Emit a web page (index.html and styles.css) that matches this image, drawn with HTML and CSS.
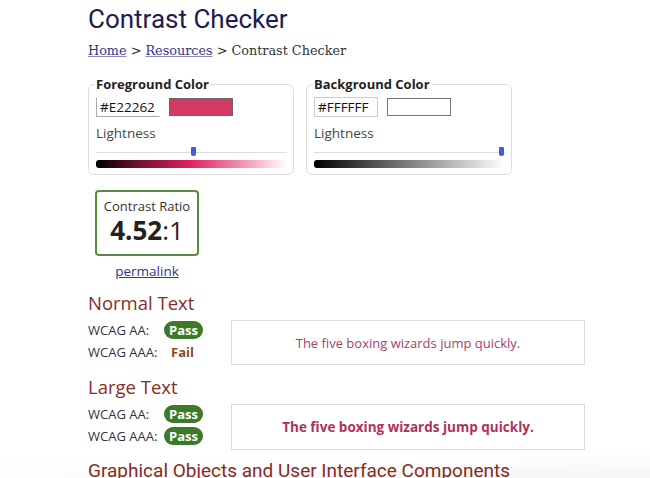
FILE: index.html
```html
<!DOCTYPE html>
<html>
<head>
<meta charset="utf-8">
<link rel="stylesheet" href="styles.css">
</head>
<body>
<main class="page">
  <h1 class="title">Contrast Checker</h1>
  <nav class="crumbs"><a href="#">Home</a> &gt; <a href="#">Resources</a> &gt; Contrast Checker</nav>

  <div class="pickers">
    <fieldset class="picker">
      <legend>Foreground Color</legend>
      <div class="row">
        <input class="hex" type="text" value="#E22262">
        <span class="swatch fg"></span>
      </div>
      <div class="label">Lightness</div>
      <div class="slider"><span class="thumb fg-thumb"></span></div>
      <div class="grad fg-grad"></div>
    </fieldset>
    <fieldset class="picker">
      <legend>Background Color</legend>
      <div class="row">
        <input class="hex" type="text" value="#FFFFFF">
        <span class="swatch bg"></span>
      </div>
      <div class="label">Lightness</div>
      <div class="slider"><span class="thumb bg-thumb"></span></div>
      <div class="grad bg-grad"></div>
    </fieldset>
  </div>

  <div class="ratio-wrap">
    <div class="ratio">
      <div class="ratio-label">Contrast Ratio</div>
      <div class="ratio-value">4.52<span class="colon">:</span><span class="one">1</span></div>
    </div>
    <a class="permalink" href="#">permalink</a>
  </div>

  <h2 class="section first">Normal Text</h2>
  <div class="result">
    <div class="checks">
      <div class="check"><span class="lvl">WCAG AA:</span><span class="badge pass">Pass</span></div>
      <div class="check"><span class="lvl">WCAG AAA:</span><span class="badge fail">Fail</span></div>
    </div>
    <div class="sample">The five boxing wizards jump quickly.</div>
  </div>

  <h2 class="section">Large Text</h2>
  <div class="result">
    <div class="checks">
      <div class="check"><span class="lvl">WCAG AA:</span><span class="badge pass">Pass</span></div>
      <div class="check"><span class="lvl">WCAG AAA:</span><span class="badge pass">Pass</span></div>
    </div>
    <div class="sample large">The five boxing wizards jump quickly.</div>
  </div>

  <h2 class="section last">Graphical Objects and User Interface Components</h2>
</main>
<div class="shade"></div>
</body>
</html>
```
FILE: styles.css
```css
html, body {
  margin: 0;
  padding: 0;
  background: #fff;
}
body {
  font-family: "Open Sans", "Noto Sans", sans-serif;
  color: #333;
  overflow: hidden;
  height: 478px;
}
.page {
  padding: 4px 0 0 88px;
}
.title {
  font-family: Roboto, sans-serif;
  font-weight: 400;
  font-size: 26px;
  line-height: 31px;
  color: #1e1b52;
  margin: 0;
}
.crumbs {
  font-family: "DejaVu Serif", serif;
  font-size: 12.8px;
  color: #333;
  margin-top: 7px;
  line-height: 18px;
}
.crumbs a {
  color: #34348a;
  text-decoration-thickness: 1px;
  text-decoration-color: #8a8ac0;
}
.pickers {
  display: flex;
  gap: 12px;
  margin-top: 16px;
}
.picker {
  width: 191px;
  margin: 0;
  padding: 0 6px 6px 7px;
  border: 1px solid #ddd;
  border-radius: 6px;
  min-width: 0;
}
.picker legend {
  font-weight: 700;
  font-size: 13px;
  color: #222;
  padding: 0 1px;
  margin-left: -1px;
  line-height: 16px;
}
.row {
  display: flex;
  align-items: center;
  gap: 9px;
  margin-top: 5px;
}
.hex {
  width: 56px;
  height: 18px;
  box-sizing: content-box;
  padding: 0 3px;
  font-family: "Open Sans", sans-serif;
  font-size: 13.5px;
  color: #111;
  border: 1px solid #aaa;
  border-top-color: #fff;
  border-right-color: #fff;
  margin: 0;
}
.picker + .picker .hex {
  border: 1px solid #ccc;
}
.swatch {
  width: 62px;
  height: 16px;
  border: 1px solid #666;
}
.swatch.fg { background: #d23a64; }
.swatch.bg { background: #fff; border-color: #777; }
.label {
  font-size: 13.5px;
  color: #444;
  margin-top: 7px;
  line-height: 18px;
}
.slider {
  position: relative;
  height: 1px;
  background: #ddd;
  margin-top: 10px;
}
.thumb {
  position: absolute;
  top: -5px;
  width: 5px;
  height: 9px;
  background: #4a5bd0;
  border-radius: 1px 1px 2px 2px;
}
.fg-thumb { left: 95px; }
.bg-thumb { left: 185px; }
.grad {
  height: 8px;
  border-radius: 3px;
  margin-top: 7px;
}
.fg-grad {
  background: linear-gradient(to right, #000 0%, #7a1234 25%, #e22262 50%, #f08cb0 75%, #fff 100%);
}
.bg-grad {
  background: linear-gradient(to right, #000, #fff);
}
.ratio-wrap {
  display: flex;
  flex-direction: column;
  align-items: center;
  width: 106px;
  margin-top: 15px;
  margin-left: 6px;
}
.ratio {
  width: 100px;
  height: 62px;
  border: 2px solid #5b8a3c;
  border-radius: 4px;
  text-align: center;
}
.ratio-label {
  font-size: 13px;
  color: #333;
  margin-top: 6px;
  line-height: 16px;
}
.ratio-value {
  font-weight: 700;
  font-size: 26px;
  color: #222;
  line-height: 30px;
  margin-top: 1px;
}
.ratio-value .colon { font-weight: 400; }
.ratio-value .one { font-weight: 400; color: #3a1a22; }
.permalink {
  font-size: 13.5px;
  color: #34348a;
  margin-top: 6px;
}
.section {
  font-family: "Open Sans", sans-serif;
  font-weight: 400;
  font-size: 18.5px;
  color: #8a2c24;
  margin: 10px 0 0;
  line-height: 24px;
}
.section.first {
  margin-top: 11px;
}
.section.last {
  font-family: Roboto, sans-serif;
  font-size: 19px;
  margin-top: 9px;
}
.result {
  display: flex;
  align-items: flex-start;
  margin-top: 5px;
}
.checks {
  width: 143px;
  margin-top: -1px;
}
.check {
  display: flex;
  align-items: center;
  height: 22px;
}
.lvl {
  width: 76px;
  font-size: 13px;
  color: #333;
}
.badge {
  font-size: 13px;
  font-weight: 700;
  line-height: 18px;
  padding: 0 5px;
  border-radius: 9px;
}
.badge.pass {
  background: #3c7a27;
  color: #fff;
}
.badge.fail {
  color: #8a4a1c;
  padding-left: 7px;
}
.sample {
  width: 352px;
  height: 43px;
  border: 1px solid #ddd;
  display: flex;
  align-items: center;
  justify-content: center;
  font-size: 13px;
  color: #a8406a;
}
.sample.large {
  height: 44px;
  font-size: 13.5px;
  font-weight: 700;
  color: #b0305e;
}
.shade {
  position: fixed;
  left: 0;
  right: 0;
  bottom: 0;
  height: 26px;
  pointer-events: none;
  background: linear-gradient(to bottom, rgba(0,0,0,0), rgba(0,0,0,0.04));
  -webkit-mask-image: linear-gradient(to right, rgba(0,0,0,0.2), #000);
  mask-image: linear-gradient(to right, rgba(0,0,0,0.2), #000);
}
```
